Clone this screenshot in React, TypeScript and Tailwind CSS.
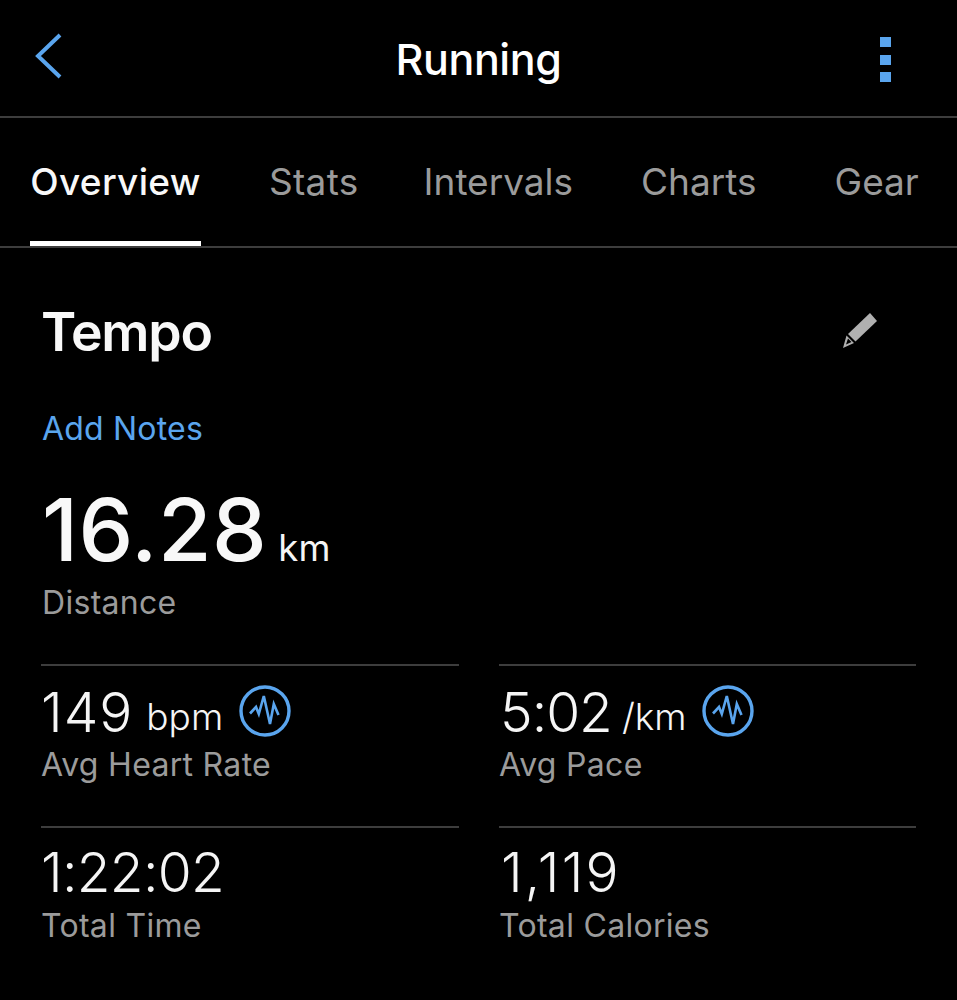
import React from "react";

function Pulse({ className }: { className?: string }) {
  return (
    <svg viewBox="0 0 52 52" width="52" height="52" className={className} fill="none" stroke="#5aa5ee">
      <circle cx="26" cy="26" r="24" strokeWidth="3.4" />
      <path d="M11 28.5 L17 22 L19.8 29 L24.8 11 L31 39 L34.8 19 L39.5 30" strokeWidth="2.6" strokeLinejoin="miter" strokeLinecap="butt" />
    </svg>
  );
}

function Stat({
  value,
  unit,
  label,
  icon,
  valueClass,
  unitClass = "ml-[13px]",
  iconClass = "ml-4",
  labelClass = "mt-[17px]",
}: {
  value: string;
  unit?: string;
  label: string;
  icon?: boolean;
  valueClass: string;
  unitClass?: string;
  iconClass?: string;
  labelClass?: string;
}) {
  return (
    <div className="flex-1 border-t-2 border-[#3d3d3d] h-[162px]">
      <div className="flex items-start h-[62px]">
        <span className={`text-[55px] text-[#f5f5f5] font-light h-[62px] ${valueClass}`}>{value}</span>
        {unit && <span className={`text-[37px] leading-[102px] text-[#f5f5f5] font-light h-[62px] ${unitClass}`}>{unit}</span>}
        {icon && <Pulse className={`mt-[19px] shrink-0 ${iconClass}`} />}
      </div>
      <div className={`text-[32px] leading-[40px] font-normal tracking-[0.3px] text-[#9b9b9b] ${labelClass}`}>{label}</div>
    </div>
  );
}

export default function App() {
  return (
    <div className="w-[957px] h-[1000px] bg-black text-white overflow-hidden font-['Inter','Liberation_Sans',sans-serif]">
      <header className="h-[118px] border-b-2 border-[#3d3d3d] flex items-center justify-between pl-[34px] pr-[66px] relative">
        <svg width="28" height="46" viewBox="0 0 28 46" fill="none" stroke="#5aa5ee" strokeWidth="4" className="mb-[4px]">
          <path d="M26 2 L4 23 L26 44" />
        </svg>
        <h1 className="text-[43px] leading-none font-medium absolute left-0 right-0 text-center mt-[3px] tracking-[-0.4px]">Running</h1>
        <div className="flex flex-col gap-[7.5px] mt-[3px]">
          <span className="w-[11px] h-[10px] bg-[#5aa5ee]" />
          <span className="w-[11px] h-[10px] bg-[#5aa5ee]" />
          <span className="w-[11px] h-[10px] bg-[#5aa5ee]" />
        </div>
      </header>

      <nav className="h-[130px] border-b-2 border-[#3d3d3d] flex pl-[30px] text-[37px] text-[#9b9b9b]">
        <div className="w-[171px] h-[128px] border-b-[5px] border-white text-[#f8f8f8] font-medium text-center leading-[127px] tracking-[0.3px]">Overview</div>
        <div className="ml-[68px] leading-[127px] tracking-[0.3px]">Stats</div>
        <div className="ml-[65px] leading-[127px]">Intervals</div>
        <div className="ml-[68px] leading-[127px]">Charts</div>
        <div className="ml-[78px] leading-[127px]">Gear</div>
      </nav>

      <main className="pl-[41px] pr-[41px]">
        <div className="flex items-center justify-between pr-[39px] h-[84px] mt-[42px]">
          <h2 className="text-[53.5px] leading-none font-semibold tracking-[-1.2px] text-[#f8f8f8]">Tempo</h2>
          <svg width="36" height="38" viewBox="0 0 36 38" fill="#b0b0b0" className="mt-[-4px]">
            <path d="M29 2 L36 10 L14.5 30.5 L7 23 Z" />
            <path fillRule="evenodd" d="M2 37 L5.5 24.5 L13 32 Z M5 33.5 L7 27.5 L10.5 31 Z" />
          </svg>
        </div>
        <div className="text-[32px] leading-[40px] text-[#5aa5ee] pl-px mt-[35px] tracking-[0.2px]">Add Notes</div>
        <div className="flex items-baseline pl-px mt-[36px] h-[90px]">
          <span className="text-[87px] leading-[90px] font-medium tracking-[0.5px] text-[#f8f8f8]">16.28</span>
          <span className="text-[36.5px] ml-[11px] text-[#f5f5f5]">km</span>
        </div>
        <div className="text-[32px] leading-[40px] text-[#9b9b9b] pl-px mt-[8px] tracking-[0.3px]">Distance</div>

        <div className="grid grid-cols-[418px_417px] gap-x-[40px] mt-[41px]">
          <Stat value="149" unit="bpm" label="Avg Heart Rate" icon valueClass="leading-[92px] tracking-[1px]" />
          <Stat
            value="5:02"
            unit="/km"
            label="Avg Pace"
            icon
            valueClass="leading-[92px] tracking-[-1px] pl-[1px]"
            unitClass="ml-[10px]"
            iconClass="ml-[15px]"
          />
          <Stat value="1:22:02" label="Total Time" valueClass="leading-[89px] tracking-[-0.7px]" labelClass="mt-[16px]" />
          <Stat value="1,119" label="Total Calories" valueClass="leading-[89px] tracking-[2.2px] pl-[2px]" labelClass="mt-[16px]" />
        </div>
      </main>
    </div>
  );
}
